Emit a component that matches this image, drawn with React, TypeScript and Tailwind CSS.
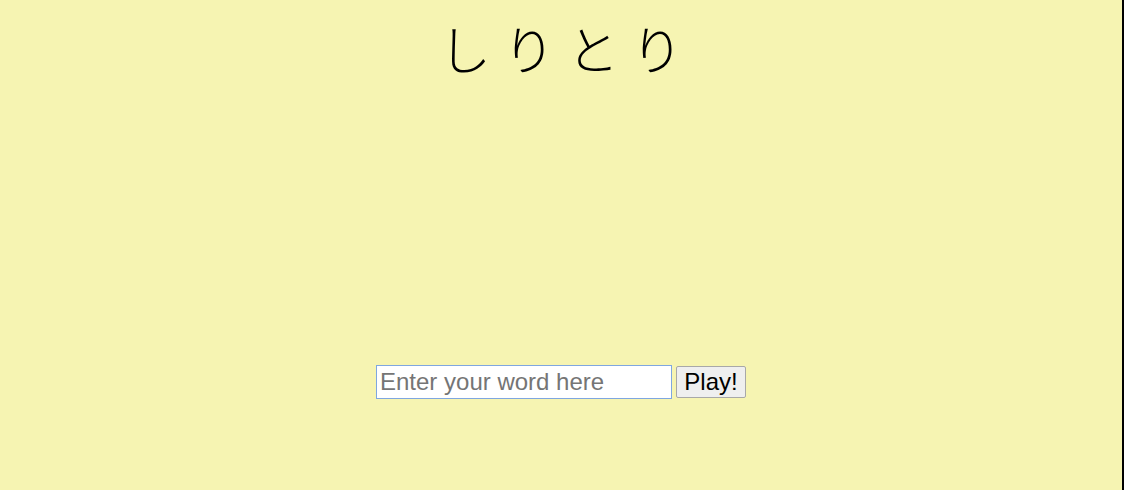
import React from "react";

export default function App() {
  return (
    <div className="w-[1124px] h-[490px] bg-[#f6f4b2] border-r-2 border-black flex flex-col items-center font-['Liberation_Sans',Arial,sans-serif]">
      <h1 className="mt-[12px] pl-[12px] text-[52px] leading-[72px] tracking-[12px] font-light text-black font-['Noto_Sans_CJK_JP',sans-serif]">
        しりとり
      </h1>
      <form
        className="mt-[281px] flex items-center gap-[4px]"
        onSubmit={(e) => e.preventDefault()}
      >
        <input
          type="text"
          placeholder="Enter your word here"
          className="w-[296px] h-[34px] px-[3px] bg-white border border-[#7fa7e0] outline-none text-[24px] text-black placeholder:text-[#757575] font-['Liberation_Sans',Arial,sans-serif]"
        />
        <button
          type="submit"
          className="w-[70px] h-[32px] bg-[#efefef] border border-[#a8a8a8] rounded-[2px] text-[24px] leading-none text-black font-['Liberation_Sans',Arial,sans-serif]"
        >
          Play!
        </button>
      </form>
    </div>
  );
}
